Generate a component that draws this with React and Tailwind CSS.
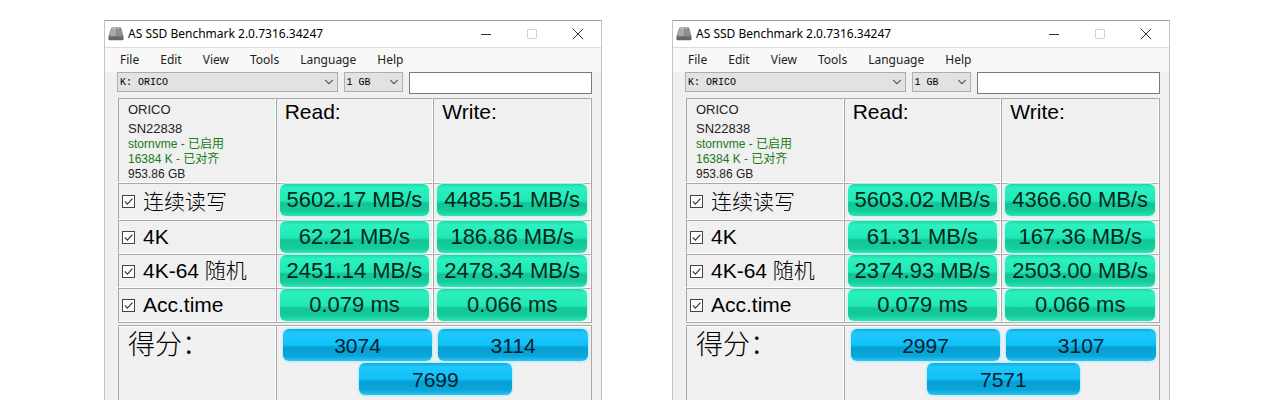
import { useState } from 'react';
import { ChevronDown } from 'lucide-react';

const MENU_ITEMS = ['File', 'Edit', 'View', 'Tools', 'Language', 'Help'];

const RUNS = [
  {
    id: 'run-1',
    rows: [
      { id: 'seq', label: '连续读写', read: '5602.17 MB/s', write: '4485.51 MB/s' },
      { id: '4k', label: '4K', read: '62.21 MB/s', write: '186.86 MB/s' },
      { id: '4k64', label: '4K-64 随机', read: '2451.14 MB/s', write: '2478.34 MB/s' },
      { id: 'acc', label: 'Acc.time', read: '0.079 ms', write: '0.066 ms' },
    ],
    score: { read: '3074', write: '3114', total: '7699' },
  },
  {
    id: 'run-2',
    rows: [
      { id: 'seq', label: '连续读写', read: '5603.02 MB/s', write: '4366.60 MB/s' },
      { id: '4k', label: '4K', read: '61.31 MB/s', write: '167.36 MB/s' },
      { id: '4k64', label: '4K-64 随机', read: '2374.93 MB/s', write: '2503.00 MB/s' },
      { id: 'acc', label: 'Acc.time', read: '0.079 ms', write: '0.066 ms' },
    ],
    score: { read: '2997', write: '3107', total: '7571' },
  },
];

const DiskIcon = () => (
  <svg viewBox="0 0 16 16" className="h-4 w-4 shrink-0" aria-hidden="true">
    <path d="M4 1.2h8.4q.6 0 .8.7L15.5 10H.5l2.7-8.1q.2-.7.8-.7z" fill="#8d8d8d" />
    <path d="M4.2 1.8h4l-.8 8.2H1.4z" fill="#a8a8a8" />
    <path d="M.5 9.8h15v3.6q0 .8-.8.8H1.3q-.8 0-.8-.8z" fill="#666" />
    <path d="M.7 10h14.6" stroke="#a9a9a9" strokeWidth=".6" />
    <circle cx="6.6" cy="2.6" r=".7" fill="#eee" />
    <circle cx="10.2" cy="2.6" r=".7" fill="#ddd" />
  </svg>
);

const TitleBar = () => (
  <div className="flex h-[27px] items-center border-b border-[#dcdcdc] bg-white pl-[3px]">
    <DiskIcon />
    <h2 className="ml-1 flex-1 whitespace-nowrap font-['Noto_Sans',sans-serif] text-[12px] text-black">
      AS SSD Benchmark 2.0.7316.34247
    </h2>
    <button type="button" aria-label="Minimize" className="flex h-full w-[46px] items-center justify-center">
      <svg viewBox="0 0 12 12" className="h-3 w-3" stroke="#333" fill="none">
        <path d="M1 6.5h10" />
      </svg>
    </button>
    <button type="button" aria-label="Maximize" disabled className="flex h-full w-[46px] items-center justify-center">
      <svg viewBox="0 0 12 12" className="h-3 w-3" stroke="#d2d2d2" fill="none">
        <path d="M1.5 1.5h9v9h-9z" />
      </svg>
    </button>
    <button type="button" aria-label="Close" className="flex h-full w-[46px] items-center justify-center">
      <svg viewBox="0 0 12 12" className="h-3 w-3" stroke="#333" fill="none">
        <path d="M.8.8l10.4 10.4M11.2.8L.8 11.2" />
      </svg>
    </button>
  </div>
);

const Dropdown = ({ label, value }) => (
  <div className="relative">
    <select
      aria-label={label}
      defaultValue={value}
      className="block h-5 w-full appearance-none border border-[#adadad] bg-[#e2e2e2] pl-[2px] font-['Liberation_Mono',monospace] text-[10px] text-black"
    >
      <option>{value}</option>
    </select>
    <ChevronDown
      className="pointer-events-none absolute right-[2px] top-[3px] h-[14px] w-[14px] text-[#666]"
      strokeWidth={2}
    />
  </div>
);

const Checkbox = ({ id, checked, onChange }) => (
  <span className="grid h-[13px] w-[13px] shrink-0">
    <input
      id={id}
      type="checkbox"
      checked={checked}
      onChange={onChange}
      className="peer col-start-1 row-start-1 h-[13px] w-[13px] appearance-none border border-[#444] bg-white"
    />
    <svg
      viewBox="0 0 13 13"
      className="pointer-events-none invisible col-start-1 row-start-1 h-[13px] w-[13px] peer-checked:visible"
      fill="none"
      stroke="#333"
      strokeWidth="1.2"
    >
      <path d="M2.8 6.4l2.6 2.7 5-5.4" />
    </svg>
  </span>
);

const Pill = ({ tone = 'green', className = '', children }) => (
  <div
    className={`flex h-8 items-center justify-center whitespace-nowrap rounded-[6px] leading-none ${
      tone === 'green'
        ? 'bg-[linear-gradient(#1fd9ab_0%,#2bf0bf_12%,#22e8b6_52%,#12c596_60%,#17cd9d_85%,#2be5b8_100%)] text-[22px] text-[#04271c] shadow-[0_0_2px_1px_#c3f7e8]'
        : 'bg-[linear-gradient(#10a9e0_0%,#1fc8fb_12%,#10c0f8_50%,#069fd2_58%,#0aa6da_85%,#2cc6f4_100%)] text-[21px] text-[#04202c] shadow-[0_0_2px_1px_#b5eafb]'
    } ${className}`}
  >
    {children}
  </div>
);

const CELL = 'border-l border-t border-r border-b border-l-[#a8a8a8] border-t-[#a8a8a8] border-r-white border-b-white';

const ResultTable = ({ runId, rows }) => {
  const [enabled, setEnabled] = useState({ seq: true, '4k': true, '4k64': true, acc: true });

  const toggle = (id) => setEnabled((prev) => ({ ...prev, [id]: !prev[id] }));

  return (
    <table className="w-full table-fixed border-separate border-spacing-0 border-b border-r border-[#a8a8a8]">
      <thead>
        <tr className="h-[85px] align-top">
          <td className={`${CELL} pl-[9px] pt-[3px] text-[12px] leading-[15px] text-[#222]`}>
            <p className="text-[13px] leading-4">ORICO</p>
            <p className="pt-[3px] text-[13px] leading-4">SN22838</p>
            <p className="whitespace-nowrap text-[#187a18]">stornvme - 已启用</p>
            <p className="whitespace-nowrap text-[#187a18]">16384 K - 已对齐</p>
            <p>953.86 GB</p>
          </td>
          <th scope="col" className={`${CELL} pl-2 pt-px text-left text-[21px] font-normal leading-6`}>
            Read:
          </th>
          <th scope="col" className={`${CELL} pl-2 pt-px text-left text-[21px] font-normal leading-6`}>
            Write:
          </th>
        </tr>
      </thead>
      <tbody>
        {rows.map((row) => (
          <tr key={row.id} className="h-[34px] first:h-[37px]">
            <th scope="row" className={`${CELL} p-0 pl-[3px] font-normal`}>
              <div className="flex items-center gap-2">
                <Checkbox
                  id={`${runId}-${row.id}`}
                  checked={enabled[row.id]}
                  onChange={() => toggle(row.id)}
                />
                <label
                  htmlFor={`${runId}-${row.id}`}
                  className="whitespace-nowrap text-[21px] font-light leading-6"
                >
                  {row.label}
                </label>
              </div>
            </th>
            <td className={`${CELL} p-0 px-[3px] align-top`}>
              <Pill>{row.read}</Pill>
            </td>
            <td className={`${CELL} p-0 px-[3px] align-top`}>
              <Pill>{row.write}</Pill>
            </td>
          </tr>
        ))}
      </tbody>
    </table>
  );
};

const ScorePanel = ({ score }) => (
  <div className="mt-[2px] grid grid-cols-3 border-r border-t border-[#a8a8a8]">
    <div className="border-l border-r border-t border-l-[#a8a8a8] border-r-white border-t-white pl-[9px]">
      <h3 className="text-[27px] font-light leading-9">得分：</h3>
    </div>
    <div className="col-span-2 grid grid-cols-2 gap-x-[6px] gap-y-[2px] border-l border-t border-l-[#a8a8a8] border-t-white pb-[5px] pl-[6px] pr-[3px] pt-[2px]">
      <Pill tone="blue">{score.read}</Pill>
      <Pill tone="blue">{score.write}</Pill>
      <Pill tone="blue" className="col-span-2 w-1/2 justify-self-center">{score.total}</Pill>
    </div>
  </div>
);

const BenchmarkWindow = ({ run }) => (
  <section className="min-w-0 flex-1 border-l border-r border-t border-[#a0a0a0] border-l-[#c4c4c4] border-r-[#c4c4c4] bg-[#f0f0f0]">
    <TitleBar />
    <nav className="flex h-6 items-center gap-[21px] bg-[#f8f8f8] pl-[15px] font-['Noto_Sans',sans-serif] text-[12px] text-[#222]">
      {MENU_ITEMS.map((item) => (
        <button key={item} type="button">
          {item}
        </button>
      ))}
    </nav>
    <div className="grid grid-cols-[221fr_60fr_183fr] items-start gap-x-[6px] pl-3 pr-[9px]">
      <Dropdown label="Drive" value="K: ORICO" />
      <Dropdown label="Test size" value="1 GB" />
      <input
        type="text"
        aria-label="Comment"
        className="h-[22px] w-full border border-[#7a7a7a] bg-white px-1 text-[12px]"
      />
    </div>
    <div className="pl-[13px] pr-[9px] pt-1">
      <ResultTable runId={run.id} rows={run.rows} />
      <ScorePanel score={run.score} />
    </div>
  </section>
);

export default function App() {
  return (
    <main className="flex gap-[70px] bg-white pl-[104px] pr-[110px] pt-5 font-['Liberation_Sans','Noto_Sans_CJK_SC',sans-serif] text-black">
      {RUNS.map((run) => (
        <BenchmarkWindow key={run.id} run={run} />
      ))}
    </main>
  );
}
